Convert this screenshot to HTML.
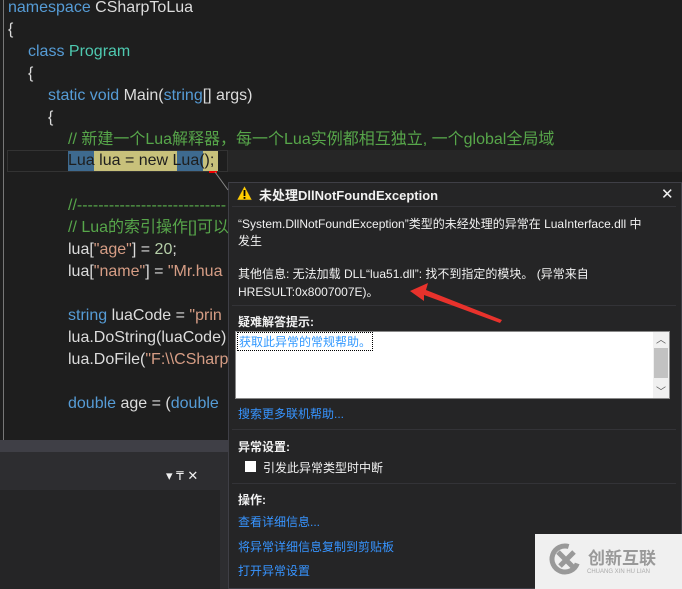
<!DOCTYPE html>
<html><head><meta charset="utf-8"><style>
body{margin:0;width:682px;height:589px;background:#1e1e1e;position:relative;overflow:hidden;font-family:"Liberation Sans","Noto Sans CJK SC",sans-serif}
.c{position:absolute;font-size:16px;white-space:pre;line-height:22px;color:#dcdcdc;font-family:"Liberation Sans","Noto Sans CJK SC",sans-serif}
.k{color:#569cd6}.t{color:#4ec9b0}.g{color:#57a64a}.s{color:#d69d85}.n{color:#b5cea8}
.d{position:absolute;font-size:12px;white-space:pre;color:#f1f1f1}
.l{color:#3794ff}
.b{font-weight:bold}
.sep{position:absolute;left:232px;width:444px;height:1px;background:#333337}
</style></head><body>
<div style="position:absolute;left:3px;top:0;width:1px;height:440px;background:#777"></div>
<div style="position:absolute;left:7px;top:150px;width:221px;height:22px;border:1px solid #333;background:#1e1e1e;box-sizing:border-box"></div>
<div style="position:absolute;left:228px;top:150px;width:454px;height:22px;background:#262626"></div>
<div class="c" style="left:8px;top:-3px"><span class="k">namespace</span> CSharpToLua</div>
<div class="c" style="left:8px;top:19px">{</div>
<div class="c" style="left:28px;top:41px"><span class="k">class</span> <span class="t">Program</span></div>
<div class="c" style="left:28px;top:63px">{</div>
<div class="c" style="left:48px;top:85px"><span class="k">static void</span> Main(<span class="k">string</span>[] args)</div>
<div class="c" style="left:48px;top:107px">{</div>
<div class="c g" style="left:68px;top:129px">// 新建一个Lua解释器，每一个Lua实例都相互独立, 一个global全局域</div>
<div style="position:absolute;left:68px;top:151px;width:150px;height:20px;background:#c8c17b"></div>
<div style="position:absolute;left:68px;top:151px;width:26px;height:20px;background:#3e6a8f"></div>
<div style="position:absolute;left:177px;top:151px;width:26px;height:20px;background:#3e6a8f"></div>
<div class="c" style="left:68px;top:150px;color:#1e1e1e">Lua lua = new Lua();</div>
<div style="position:absolute;left:209px;top:171px;width:8px;height:2px;background:#e00"></div>
<div class="c g" style="left:68px;top:195px">//----------------------------</div>
<div class="c g" style="left:68px;top:217px">// Lua的索引操作[]可以</div>
<div class="c" style="left:68px;top:239px">lua[<span class="s">"age"</span>] = <span class="n">20</span>;</div>
<div class="c" style="left:68px;top:261px">lua[<span class="s">"name"</span>] = <span class="s">"Mr.hua</span></div>
<div class="c" style="left:68px;top:305px"><span class="k">string</span> luaCode = <span class="s">"prin</span></div>
<div class="c" style="left:68px;top:327px">lua.DoString(luaCode)</div>
<div class="c" style="left:68px;top:349px">lua.DoFile(<span class="s">"F:\\CSharp</span></div>
<div class="c" style="left:68px;top:393px"><span class="k">double</span> age = (<span class="k">double</span></div>
<div style="position:absolute;left:0;top:440px;width:228px;height:12px;background:#3f3f46"></div>
<div style="position:absolute;left:0;top:452px;width:228px;height:13px;background:#2d2d30"></div>
<div style="position:absolute;left:0;top:465px;width:220px;height:25px;background:#2d2d30"></div>
<div style="position:absolute;left:0;top:490px;width:220px;height:99px;background:#252526"></div>
<div style="position:absolute;left:220px;top:465px;width:8px;height:124px;background:#2d2d30"></div>
<div class="d" style="left:166px;top:468px;font-size:13px">▾ <span style="font-size:12px">₸</span> ✕</div>
<div style="position:absolute;left:228px;top:182px;width:454px;height:407px;background:#252526;border:1px solid #3f3f46;box-sizing:border-box"></div>
<svg style="position:absolute;left:236px;top:185px" width="17" height="16"><polygon points="8.5,1 16,15 1,15" fill="#fc0" stroke="#333" stroke-width=".5"/><rect x="7.6" y="5" width="1.8" height="6" fill="#000"/><rect x="7.6" y="12" width="1.8" height="1.8" fill="#000"/></svg>
<div class="d b" style="left:259px;top:185px;font-size:13px">未处理DllNotFoundException</div>
<div class="d" style="left:661px;top:185px;font-size:15px">✕</div>
<div class="sep" style="top:206px"></div>
<div class="d" style="left:238px;top:215px">“System.DllNotFoundException”类型的未经处理的异常在 LuaInterface.dll 中</div>
<div class="d" style="left:238px;top:232px">发生</div>
<div class="d" style="left:238px;top:265px">其他信息: 无法加载 DLL“lua51.dll”: 找不到指定的模块。 (异常来自</div>
<div class="d" style="left:238px;top:283px">HRESULT:0x8007007E)。</div>
<div class="sep" style="top:305px"></div>
<div class="d b" style="left:238px;top:313px">疑难解答提示:</div>
<div style="position:absolute;left:235px;top:331px;width:435px;height:68px;background:#fff;border:1px solid #888;box-sizing:border-box"></div>
<div style="position:absolute;left:653px;top:332px;width:16px;height:66px;background:#f0f0f0"></div>
<div style="position:absolute;left:654px;top:348px;width:14px;height:30px;background:#c2c2c2"></div>
<div class="d" style="left:656px;top:331px;color:#555;font-size:10px">︿</div>
<div class="d" style="left:656px;top:383px;color:#555;font-size:10px">﹀</div>
<div class="d" style="left:237px;top:332px;color:#3399ff;border:1px dotted #000;padding:0 1px">获取此异常的常规帮助。</div>
<div class="d l" style="left:238px;top:405px">搜索更多联机帮助...</div>
<div class="sep" style="top:429px"></div>
<div class="d b" style="left:238px;top:438px">异常设置:</div>
<div style="position:absolute;left:245px;top:461px;width:11px;height:11px;background:#fff"></div>
<div class="d" style="left:263px;top:459px">引发此异常类型时中断</div>
<div class="sep" style="top:483px"></div>
<div class="d b" style="left:238px;top:491px">操作:</div>
<div class="d l" style="left:238px;top:513px">查看详细信息...</div>
<div class="d l" style="left:238px;top:538px">将异常详细信息复制到剪贴板</div>
<div class="d l" style="left:238px;top:562px">打开异常设置</div>
<svg style="position:absolute;left:0;top:0" width="682" height="589"><line x1="215" y1="172" x2="228" y2="190" stroke="#888" stroke-width="1"/><polygon points="410,291 428,283 426,290 502,320 500,323 424,295 424,301" fill="#e8322c"/></svg>
<div style="position:absolute;left:535px;top:534px;width:147px;height:55px;background:#f0f0f0"></div>
<svg style="position:absolute;left:548px;top:542px" width="34" height="34"><circle cx="17" cy="17" r="13" fill="none" stroke="#999" stroke-width="5" stroke-dasharray="60 22" transform="rotate(20 17 17)"/><path d="M10 10 L26 26 M26 10 L12 24" stroke="#999" stroke-width="5"/></svg>
<div class="d" style="left:588px;top:544px;color:#999;font-size:17px;font-weight:bold">创新互联</div>
<div class="d" style="left:587px;top:569px;color:#aaa;font-size:6px">CHUANG XIN HU LIAN</div>
</body></html>
